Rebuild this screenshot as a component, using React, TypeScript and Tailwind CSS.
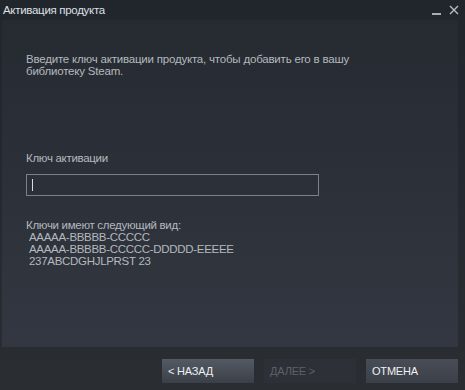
export default function App() {
  return (
    <div className="flex h-[390px] w-[465px] flex-col bg-gradient-to-b from-[#21252c] to-[#2a2d32] font-['Liberation_Sans',Arial,sans-serif] text-[11.5px] tracking-[-0.3px]">
      {/* Title bar */}
      <div className="flex h-[20px] items-center justify-between pl-[3px] pr-[6px] pt-[1px]">
        <span className="text-[#dde1e5]">Активация продукта</span>
        <div className="flex items-center gap-[8px] text-[#b9bcc0]">
          <span className="mt-[6px] block h-[2px] w-[9px] bg-[#a9adb2]" />
          <svg width="10" height="10" viewBox="0 0 10 10" className="mt-[-1px]">
            <path d="M1 1L9 9M9 1L1 9" stroke="#b9bcc0" strokeWidth="1.4" />
          </svg>
        </div>
      </div>

      {/* Content panel */}
      <div className="ml-[2px] mr-[7px] flex h-[327px] flex-col bg-gradient-to-b from-[#262a31] to-[#323741] px-[24px] pt-[33px] text-[#b4b9be]">
        <p className="w-[345px] leading-[12px] tracking-[-0.2px]">
          Введите ключ активации продукта, чтобы добавить его в вашу библиотеку Steam.
        </p>

        <p className="mt-[75px] leading-[12px]">Ключ активации</p>

        <div className="mt-[10px] flex h-[22px] w-[293px] items-center border border-[#7b818b] pl-[5px]">
          <span className="block h-[12px] w-[1px] bg-[#d8dbde]" />
        </div>

        <div className="mt-[23px] leading-[12px]">
          <p>Ключи имеют следующий вид:</p>
          <div className="pl-[3px]">
            <p>AAAAA-BBBBB-CCCCC</p>
            <p>AAAAA-BBBBB-CCCCC-DDDDD-EEEEE</p>
            <p>237ABCDGHJLPRST 23</p>
          </div>
        </div>
      </div>

      {/* Buttons */}
      <div className="mr-[7px] mt-[12px] flex justify-end gap-[10px] text-[11px] tracking-[-0.2px]">
        <button className="flex h-[24px] w-[92px] items-center bg-gradient-to-b from-[#545a64] to-[#3b4048] pl-[6px] text-[#eef0f2]">
          &lt; НАЗАД
        </button>
        <button className="flex h-[24px] w-[92px] items-center bg-[#2d3036] pl-[6px] text-[#5d6168]">
          ДАЛЕЕ &gt;
        </button>
        <button className="flex h-[24px] w-[92px] items-center bg-gradient-to-b from-[#474c56] to-[#3b4048] pl-[6px] text-[#eef0f2]">
          ОТМЕНА
        </button>
      </div>
    </div>
  );
}
